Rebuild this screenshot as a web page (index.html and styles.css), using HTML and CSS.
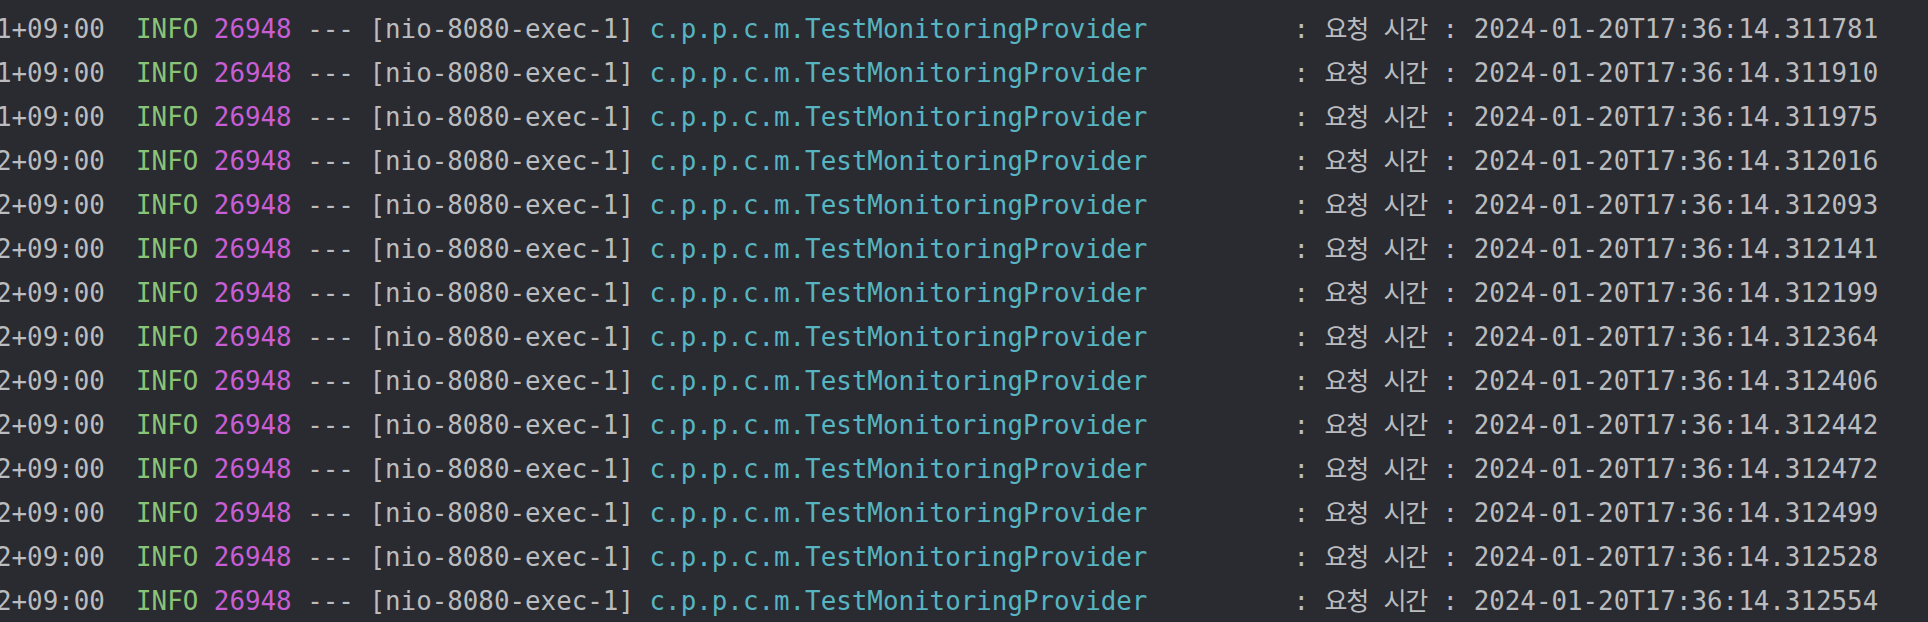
FILE: index.html
```html
<!DOCTYPE html>
<html lang="ko">
<head>
    <meta charset="UTF-8">
    <meta name="viewport" content="width=device-width, initial-scale=1.0">
    <title>Console</title>
    <link rel="stylesheet" href="styles.css">
</head>
<body>

    <div class="console">
        <div class="line"><span class="ts">1+09:00</span>  <span class="lvl">INFO</span> <span class="pid">26948</span> --- [nio-8080-exec-1] <span class="logger">c.p.p.c.m.TestMonitoringProvider</span>         : <span class="ko">요청</span> <span class="ko">시간</span> : 2024-01-20T17:36:14.311781</div>
        <div class="line"><span class="ts">1+09:00</span>  <span class="lvl">INFO</span> <span class="pid">26948</span> --- [nio-8080-exec-1] <span class="logger">c.p.p.c.m.TestMonitoringProvider</span>         : <span class="ko">요청</span> <span class="ko">시간</span> : 2024-01-20T17:36:14.311910</div>
        <div class="line"><span class="ts">1+09:00</span>  <span class="lvl">INFO</span> <span class="pid">26948</span> --- [nio-8080-exec-1] <span class="logger">c.p.p.c.m.TestMonitoringProvider</span>         : <span class="ko">요청</span> <span class="ko">시간</span> : 2024-01-20T17:36:14.311975</div>
        <div class="line"><span class="ts">2+09:00</span>  <span class="lvl">INFO</span> <span class="pid">26948</span> --- [nio-8080-exec-1] <span class="logger">c.p.p.c.m.TestMonitoringProvider</span>         : <span class="ko">요청</span> <span class="ko">시간</span> : 2024-01-20T17:36:14.312016</div>
        <div class="line"><span class="ts">2+09:00</span>  <span class="lvl">INFO</span> <span class="pid">26948</span> --- [nio-8080-exec-1] <span class="logger">c.p.p.c.m.TestMonitoringProvider</span>         : <span class="ko">요청</span> <span class="ko">시간</span> : 2024-01-20T17:36:14.312093</div>
        <div class="line"><span class="ts">2+09:00</span>  <span class="lvl">INFO</span> <span class="pid">26948</span> --- [nio-8080-exec-1] <span class="logger">c.p.p.c.m.TestMonitoringProvider</span>         : <span class="ko">요청</span> <span class="ko">시간</span> : 2024-01-20T17:36:14.312141</div>
        <div class="line"><span class="ts">2+09:00</span>  <span class="lvl">INFO</span> <span class="pid">26948</span> --- [nio-8080-exec-1] <span class="logger">c.p.p.c.m.TestMonitoringProvider</span>         : <span class="ko">요청</span> <span class="ko">시간</span> : 2024-01-20T17:36:14.312199</div>
        <div class="line"><span class="ts">2+09:00</span>  <span class="lvl">INFO</span> <span class="pid">26948</span> --- [nio-8080-exec-1] <span class="logger">c.p.p.c.m.TestMonitoringProvider</span>         : <span class="ko">요청</span> <span class="ko">시간</span> : 2024-01-20T17:36:14.312364</div>
        <div class="line"><span class="ts">2+09:00</span>  <span class="lvl">INFO</span> <span class="pid">26948</span> --- [nio-8080-exec-1] <span class="logger">c.p.p.c.m.TestMonitoringProvider</span>         : <span class="ko">요청</span> <span class="ko">시간</span> : 2024-01-20T17:36:14.312406</div>
        <div class="line"><span class="ts">2+09:00</span>  <span class="lvl">INFO</span> <span class="pid">26948</span> --- [nio-8080-exec-1] <span class="logger">c.p.p.c.m.TestMonitoringProvider</span>         : <span class="ko">요청</span> <span class="ko">시간</span> : 2024-01-20T17:36:14.312442</div>
        <div class="line"><span class="ts">2+09:00</span>  <span class="lvl">INFO</span> <span class="pid">26948</span> --- [nio-8080-exec-1] <span class="logger">c.p.p.c.m.TestMonitoringProvider</span>         : <span class="ko">요청</span> <span class="ko">시간</span> : 2024-01-20T17:36:14.312472</div>
        <div class="line"><span class="ts">2+09:00</span>  <span class="lvl">INFO</span> <span class="pid">26948</span> --- [nio-8080-exec-1] <span class="logger">c.p.p.c.m.TestMonitoringProvider</span>         : <span class="ko">요청</span> <span class="ko">시간</span> : 2024-01-20T17:36:14.312499</div>
        <div class="line"><span class="ts">2+09:00</span>  <span class="lvl">INFO</span> <span class="pid">26948</span> --- [nio-8080-exec-1] <span class="logger">c.p.p.c.m.TestMonitoringProvider</span>         : <span class="ko">요청</span> <span class="ko">시간</span> : 2024-01-20T17:36:14.312528</div>
        <div class="line"><span class="ts">2+09:00</span>  <span class="lvl">INFO</span> <span class="pid">26948</span> --- [nio-8080-exec-1] <span class="logger">c.p.p.c.m.TestMonitoringProvider</span>         : <span class="ko">요청</span> <span class="ko">시간</span> : 2024-01-20T17:36:14.312554</div>
    </div>

</body>
</html>
```

FILE: styles.css
```css
* {
    margin: 0;
    padding: 0;
    box-sizing: border-box;
}

html, body {
    height: 100%;
}

body {
    background-color: #292b31;
    color: #bbbcbf;
    font-family: "DejaVu Sans Mono", "Liberation Mono", monospace;
    font-size: 25.85px;
    overflow: hidden;
}

.console {
    display: flex;
    flex-direction: column;
    padding-top: 5px;
}

.line {
    white-space: pre;
    line-height: 44px;
    height: 44px;
    text-indent: -4px;
}

.lvl {
    color: #89c476;
}

.pid {
    color: #c85ed6;
}

.logger {
    color: #57b5c2;
    padding-right: 6px;
}

.ko {
    font-family: "Noto Sans CJK KR", sans-serif;
    font-size: 25px;
    letter-spacing: -1.3px;
}
```
